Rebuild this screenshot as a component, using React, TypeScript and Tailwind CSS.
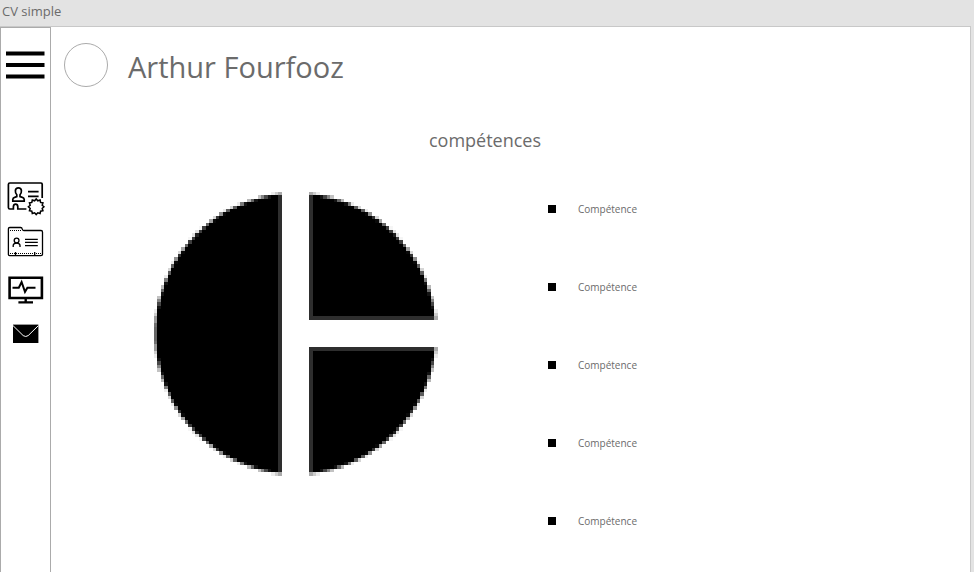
import React from "react";

const CELLS = 82;
const EDGE_SHADE = 0.82;
const edgeAt = (i: number) => Math.floor(0.2 + i * 3.4612);

function coverage(col: number, row: number): number {
  if (col >= 37 && col < 45) return 0;
  if (col >= 45 && row >= 37 && row < 45) return 0;
  let inside = 0;
  for (let a = 0; a < 5; a++) {
    for (let b = 0; b < 5; b++) {
      const dx = col + (a + 0.5) / 5 - 41;
      const dy = row + (b + 0.5) / 5 - 41;
      if (dx * dx + dy * dy < 40.6 * 40.6) inside++;
    }
  }
  let value = inside / 25;
  if (col === 36 || col === 45) value *= EDGE_SHADE;
  else if (col > 45 && (row === 36 || row === 45)) value *= EDGE_SHADE;
  return value;
}

function PieChart() {
  const cells: React.ReactElement[] = [];
  for (let row = 0; row < CELLS; row++) {
    let col = 0;
    while (col < CELLS) {
      const value = coverage(col, row);
      let end = col + 1;
      while (end < CELLS && coverage(end, row) === value) end++;
      if (value > 0) {
        cells.push(
          <rect
            key={`${row}-${col}`}
            x={edgeAt(col)}
            y={edgeAt(row)}
            width={edgeAt(end) - edgeAt(col)}
            height={edgeAt(row + 1) - edgeAt(row)}
            fillOpacity={value}
          />
        );
      }
      col = end;
    }
  }
  return (
    <svg width="284" height="284" viewBox="0 0 284 284" shapeRendering="crispEdges" role="img" aria-label="Compétences">
      {cells}
    </svg>
  );
}

function MenuIcon() {
  return (
    <svg width="39" height="28" viewBox="6 51 39 28" stroke="#000" strokeWidth="4">
      <path d="M6 53.6H44.5M6 65H44.5M6 76.4H44.5" />
    </svg>
  );
}

function gearPath(cx: number, cy: number): string {
  const points: string[] = [];
  for (let i = 0; i < 24; i++) {
    const r = i % 2 === 0 ? 7.8 : 6.2;
    const t = (i * Math.PI) / 12;
    points.push(`${(cx + r * Math.cos(t)).toFixed(2)} ${(cy + r * Math.sin(t)).toFixed(2)}`);
  }
  return `M${points.join("L")}Z`;
}

function ProfileIcon() {
  return (
    <svg width="39" height="34" viewBox="6 182 39 34" fill="none" stroke="#000" strokeWidth="1.7">
      <path d="M42.2 198V184.2Q42.2 183 41 183H9.8Q8.4 183 8.4 184.4V207.6Q8.4 209 9.8 209H13.4V206.6Q13.6 204.2 15.6 204.2Q17.6 204.2 17.8 206.6V209H26.4" />
      <path d="M12.8 201.2V199.4Q13 197.8 14.6 197.4L16.8 196.6V194.8Q15.2 193 15.4 190.6Q15.6 187.8 18.4 187.8Q21.2 187.8 21.4 190.6Q21.6 193 20 194.8V196.6L22.4 197.4Q24 197.8 24.2 199.4V201.2Z" />
      <path d="M28 191.6H38.6M28 196.4H38.6" />
      <path d={gearPath(36.2, 206.8)} fill="#fff" strokeWidth="1.5" />
    </svg>
  );
}

function FolderIcon() {
  return (
    <svg width="37" height="31" viewBox="7 226 37 31" fill="none" stroke="#000" strokeWidth="1.3">
      <path d="M8.4 254.6V228.8Q8.4 227.5 9.8 227.5H20.6Q22 227.5 22.2 229Q22.4 230.5 23.8 230.5H41Q42.5 230.5 42.5 232V254.2Q42.5 255.6 41 255.6H9.6Q8.4 255.6 8.4 254.6Z" />
      <path d="M10 230.5H21M10 253.5H42" strokeWidth="1" strokeDasharray="1 1" />
      <path d="M15.5 252V255M34.7 252V255" />
      <path d="M13.2 247V245.4Q13.4 243.2 16.6 243.2Q19.8 243.2 20 245.4V247" />
      <circle cx="16.6" cy="240.6" r="2.4" />
      <path d="M25 239.4H37.8M25 242.4H37.8M25 245.6H37.8" />
    </svg>
  );
}

function MonitorIcon() {
  return (
    <svg width="36" height="28" viewBox="8 276 36 28" fill="none" stroke="#000" strokeWidth="2.6">
      <path d="M9.6 277.8H41.9V298H9.6Z" />
      <path d="M12.5 287.7H18.8L21.6 282L25 291.8L27.4 287.7H35.5" strokeWidth="2" />
      <path d="M25.7 298V302M18.4 302.4H33" strokeWidth="2.4" />
    </svg>
  );
}

function MailIcon() {
  return (
    <svg width="26" height="19" viewBox="13 324 26 19">
      <rect x="13" y="324.6" width="25.4" height="18.4" />
      <path d="M13 325.6L23.2 335.6Q25.7 337.4 28.2 335.6L38.4 325.6" fill="none" stroke="#fff" strokeWidth="1" />
    </svg>
  );
}

const skills = [1, 2, 3, 4, 5];

export default function App() {
  return (
    <div className="flex h-screen flex-col overflow-hidden bg-[#e3e3e3] font-['Open_Sans','Noto_Sans',sans-serif] text-[#6b6b6b]">
      <div className="h-[26px] shrink-0 pl-[2px] text-[13px] leading-[22px]">CV simple</div>
      <div className="mr-[3px] flex min-h-0 flex-1 border-t border-r border-[#c8c8c8] bg-white">
        <nav className="flex w-[51px] shrink-0 flex-col items-center border border-b-0 border-[#ababab] pt-[23px]">
          <button type="button" aria-label="Menu" className="block">
            <MenuIcon />
          </button>
          <div className="mt-[103px] flex flex-col items-center">
            <a href="#profil" aria-label="Profil" className="block">
              <ProfileIcon />
            </a>
            <a href="#parcours" aria-label="Parcours" className="mt-[10px] block">
              <FolderIcon />
            </a>
            <a href="#competences" aria-label="Compétences" className="mt-[19px] block">
              <MonitorIcon />
            </a>
            <a href="#contact" aria-label="Contact" className="mt-[20px] block">
              <MailIcon />
            </a>
          </div>
        </nav>
        <main className="min-w-0 flex-1">
          <header className="flex items-start gap-5 pt-4 pl-[13px]">
            <div className="size-11 rounded-full border border-[#ababab]" />
            <h1 className="text-[29px] leading-[48px]">Arthur Fourfooz</h1>
          </header>
          <h2 className="mt-9 pr-[51px] text-center text-[18px] leading-[26px]">compétences</h2>
          <div className="mt-[39px] flex gap-[110px] pl-[103px]">
            <div className="shrink-0">
              <PieChart />
            </div>
            <ul className="flex flex-col gap-[58px] pt-[7px] text-[10px] leading-5">
              {skills.map((n) => (
                <li key={n} className="flex items-center gap-[22px]">
                  <span className="size-2 bg-black" />
                  Compétence
                </li>
              ))}
            </ul>
          </div>
        </main>
      </div>
    </div>
  );
}
